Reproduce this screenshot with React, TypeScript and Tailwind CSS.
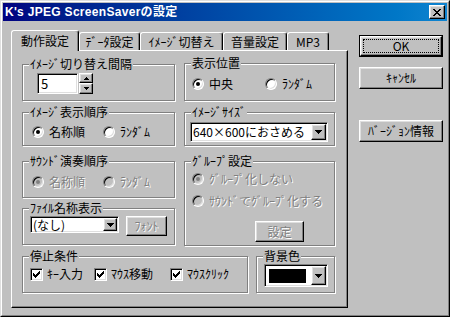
const raised =
  'border border-t-white border-l-white border-r-black border-b-black shadow-[inset_-1px_-1px_0_#808080,inset_1px_1px_0_#dfdfdf]';
const sunken =
  'border border-t-[#808080] border-l-[#808080] border-r-white border-b-white shadow-[inset_1px_1px_0_#000,inset_-1px_-1px_0_#dfdfdf]';
const etched = 'border border-[#808080] shadow-[inset_1px_1px_0_#fff,1px_1px_0_#fff]';
const dim = 'text-[#808080] [text-shadow:1px_1px_0_#fff]';

function Group({ label, className = '', children }: { label: string; className?: string; children?: React.ReactNode }) {
  return (
    <div className={`relative ${etched} ${className}`}>
      <span className="absolute -top-[8px] left-[6px] whitespace-nowrap bg-[#c0c0c0] px-[1px] leading-[14px]">{label}</span>
      {children}
    </div>
  );
}

function Down() {
  return (
    <svg width="7" height="4" viewBox="0 0 7 4" shapeRendering="crispEdges">
      <path d="M0 0h7v1H0zM1 1h5v1H1zM2 2h3v1H2zM3 3h1v1H3z" fill="#000" />
    </svg>
  );
}

function SpinArrow({ up }: { up?: boolean }) {
  return (
    <svg width="5" height="3" viewBox="0 0 5 3" shapeRendering="crispEdges">
      <path d={up ? 'M2 0h1v1H2zM1 1h3v1H1zM0 2h5v1H0z' : 'M0 0h5v1H0zM1 1h3v1H1zM2 2h1v1H2z'} fill="#000" />
    </svg>
  );
}

function Radio({ on, off }: { on?: boolean; off?: boolean }) {
  return (
    <span
      className={`flex h-[12px] w-[12px] shrink-0 items-center justify-center rounded-full border border-t-[#808080] border-l-[#808080] border-r-white border-b-white shadow-[inset_1px_1px_0_#000,inset_-1px_-1px_0_#dfdfdf] ${off ? 'bg-[#c0c0c0]' : 'bg-white'}`}
    >
      {on && <span className={`h-[4px] w-[4px] rounded-full ${off ? 'bg-[#808080]' : 'bg-black'}`} />}
    </span>
  );
}

function Option({ label, on, off, className = '' }: { label: string; on?: boolean; off?: boolean; className?: string }) {
  return (
    <div className={`flex items-center ${className}`}>
      <Radio on={on} off={off} />
      <span className={`ml-[5px] leading-[14px] ${off ? dim : ''}`}>{label}</span>
    </div>
  );
}

function Check({ label, className = '' }: { label: string; className?: string }) {
  return (
    <div className={`flex items-center ${className}`}>
      <span className={`flex h-[13px] w-[13px] shrink-0 items-center justify-center bg-white ${sunken}`}>
        <svg width="7" height="7" viewBox="0 0 7 7" shapeRendering="crispEdges">
          <path d="M0 2h1v3H0zM1 3h1v3H1zM2 4h1v3H2zM3 3h1v3H3zM4 2h1v3H4zM5 1h1v3H5zM6 0h1v3H6z" fill="#000" />
        </svg>
      </span>
      <span className="ml-[4px] leading-[14px]">{label}</span>
    </div>
  );
}

function Button({ label, off, className = '' }: { label: string; off?: boolean; className?: string }) {
  return (
    <div className={`flex items-center justify-center bg-[#c0c0c0] ${raised} ${className}`}>
      <span className={`leading-[14px] ${off ? dim : ''}`}>{label}</span>
    </div>
  );
}

const tabs = [
  { label: '動作設定', w: 'w-[68px]', active: true },
  { label: 'ﾃﾞｰﾀ設定', w: 'w-[61px]' },
  { label: 'ｲﾒｰｼﾞ切替え', w: 'w-[83px]' },
  { label: '音量設定', w: 'w-[64px]' },
  { label: 'MP3', w: 'w-[42px]' },
];

export default function App() {
  return (
    <div className="h-[317px] w-[450px] bg-[#c0c0c0] font-['Noto_Sans_CJK_JP',sans-serif] text-[12px] text-black">
      <div className="h-full w-full border border-t-[#dfdfdf] border-l-[#dfdfdf] border-r-black border-b-black">
        <div className="h-full w-full border border-t-white border-l-white border-r-[#808080] border-b-[#808080] p-[1px]">
          {/* title bar */}
          <div className="flex h-[18px] items-center bg-gradient-to-r from-[#000080] to-[#1084d0] pl-[2px] pr-[2px]">
            <span className="flex-1 font-['Liberation_Sans','Noto_Sans_CJK_JP',sans-serif] text-[12px] font-bold leading-[14px] tracking-[0.3px] text-white">
              K's JPEG ScreenSaverの設定
            </span>
            <div className={`flex h-[14px] w-[16px] items-center justify-center bg-[#c0c0c0] ${raised}`}>
              <svg width="8" height="7" viewBox="0 0 8 7" shapeRendering="crispEdges">
                <path
                  d="M0 0h2v1H0zM6 0h2v1H6zM1 1h2v1H1zM5 1h2v1H5zM2 2h4v1H2zM3 3h2v1H3zM2 4h4v1H2zM1 5h2v1H1zM5 5h2v1H5zM0 6h2v1H0zM6 6h2v1H6z"
                  fill="#000"
                />
              </svg>
            </div>
          </div>

          <div className="flex pl-[8px] pt-[9px]">
            <div className="flex flex-col">
              {/* tabs */}
              <div className="flex h-[20px] items-end">
                {tabs.map(t =>
                  t.active ? (
                    <div
                      key={t.label}
                      className={`relative z-10 -mb-[1px] flex h-[21px] items-center justify-center rounded-t-[3px] border-l border-t border-r border-l-white border-t-white border-r-black bg-[#c0c0c0] shadow-[inset_-1px_0_0_#808080] ${t.w}`}
                    >
                      <span className="leading-[14px]">{t.label}</span>
                    </div>
                  ) : (
                    <div
                      key={t.label}
                      className={`flex h-[18px] items-center justify-center rounded-t-[3px] border-l border-t border-r border-l-white border-t-white border-r-black shadow-[inset_-1px_0_0_#808080] ${t.w}`}
                    >
                      <span className="leading-[14px]">{t.label}</span>
                    </div>
                  )
                )}
              </div>

              {/* panel */}
              <div className="h-[258px] w-[337px] border border-t-white border-l-white border-r-black border-b-black pl-[10px] shadow-[inset_-1px_-1px_0_#808080]">
                <div className="flex items-start gap-[9px]">
                  <div className="mt-[13px] flex w-[153px] flex-col">
                    <Group label="ｲﾒｰｼﾞ切り替え間隔" className="h-[37px]">
                      <div className="flex pl-[14px] pt-[8px]">
                        <div className={`flex h-[21px] w-[41px] items-center bg-white pl-[3px] ${sunken}`}>
                          <span className="text-[13px] leading-[14px]">5</span>
                        </div>
                        <div className="ml-[1px] flex flex-col">
                          <div className={`flex h-[10px] w-[14px] items-center justify-center ${raised}`}>
                            <SpinArrow up />
                          </div>
                          <div className={`flex h-[11px] w-[14px] items-center justify-center ${raised}`}>
                            <SpinArrow />
                          </div>
                        </div>
                      </div>
                    </Group>

                    <Group label="ｲﾒｰｼﾞ表示順序" className="mt-[11px] h-[34px]">
                      <div className="flex pl-[9px] pt-[12px]">
                        <Option label="名称順" on className="w-[71px]" />
                        <Option label="ﾗﾝﾀﾞﾑ" />
                      </div>
                    </Group>

                    <Group label="ｻｳﾝﾄﾞ演奏順序" className="mt-[15px] h-[37px]">
                      <div className="flex pl-[9px] pt-[13px]">
                        <Option label="名称順" on off className="w-[71px]" />
                        <Option label="ﾗﾝﾀﾞﾑ" off />
                      </div>
                    </Group>

                    <Group label="ﾌｧｲﾙ名称表示" className="mt-[10px] h-[37px]">
                      <div className="flex items-start pl-[7px] pt-[7px]">
                        <div className={`flex h-[17px] w-[89px] items-center bg-white p-[1px] ${sunken}`}>
                          <span className="flex-1 pl-[1px] leading-[13px]">(なし)</span>
                          <div className={`flex h-[13px] w-[14px] items-center justify-center bg-[#c0c0c0] ${raised}`}>
                            <Down />
                          </div>
                        </div>
                        <Button label="ﾌｫﾝﾄ" off className="ml-[7px] h-[20px] w-[41px]" />
                      </div>
                    </Group>
                  </div>

                  <div className="mt-[12px] flex w-[151px] flex-col">
                    <Group label="表示位置" className="h-[38px]">
                      <div className="flex pl-[7px] pt-[13px]">
                        <Option label="中央" on className="w-[73px]" />
                        <Option label="ﾗﾝﾀﾞﾑ" />
                      </div>
                    </Group>

                    <Group label="ｲﾒｰｼﾞｻｲｽﾞ" className="mt-[11px] h-[34px]">
                      <div className="pl-[5px] pt-[9px]">
                        <div className={`flex h-[20px] w-[138px] items-center bg-white p-[1px] ${sunken}`}>
                          <span className="flex-1 whitespace-nowrap pl-[1px] leading-[14px]">640×600におさめる</span>
                          <div className={`flex h-[16px] w-[15px] items-center justify-center bg-[#c0c0c0] ${raised}`}>
                            <Down />
                          </div>
                        </div>
                      </div>
                    </Group>

                    <Group label="ｸﾞﾙｰﾌﾟ設定" className="mt-[15px] h-[85px]">
                      <div className="flex flex-col pl-[7px] pt-[10px]">
                        <Option label="ｸﾞﾙｰﾌﾟ化しない" on off />
                        <Option label="ｻｳﾝﾄﾞでｸﾞﾙｰﾌﾟ化する" off className="mt-[8px]" />
                        <Button label="設定" off className="ml-[63px] mt-[13px] h-[21px] w-[49px]" />
                      </div>
                    </Group>
                  </div>
                </div>

                <div className="mt-[10px] flex gap-[8px]">
                  <Group label="停止条件" className="h-[37px] w-[226px]">
                    <div className="flex pl-[7px] pt-[10px]">
                      <Check label="ｷｰ入力" className="w-[64px]" />
                      <Check label="ﾏｳｽ移動" className="w-[76px]" />
                      <Check label="ﾏｳｽｸﾘｯｸ" />
                    </div>
                  </Group>
                  <Group label="背景色" className="h-[37px] w-[79px]">
                    <div className="pl-[7px] pt-[7px]">
                      <div className={`flex h-[23px] w-[64px] items-center bg-white p-[1px] ${sunken}`}>
                        <div className="flex-1 pl-[3px]">
                          <div className="h-[14px] w-[37px] bg-black" />
                        </div>
                        <div className={`flex h-[19px] w-[15px] items-center justify-center bg-[#c0c0c0] ${raised}`}>
                          <Down />
                        </div>
                      </div>
                    </div>
                  </Group>
                </div>
              </div>
            </div>

            {/* buttons */}
            <div className="ml-[11px] flex flex-col pt-[5px]">
              <div className="flex h-[22px] w-[84px] border border-black">
                <div className={`flex flex-1 p-[2px] ${raised}`}>
                  <div className="flex flex-1 items-center justify-center border border-dotted border-black">
                    <span className="leading-[14px]">OK</span>
                  </div>
                </div>
              </div>
              <Button label="ｷｬﾝｾﾙ" className="mt-[10px] h-[22px] w-[84px]" />
              <Button label="ﾊﾞｰｼﾞｮﾝ情報" className="mt-[31px] h-[22px] w-[84px]" />
            </div>
          </div>
        </div>
      </div>
    </div>
  );
}
